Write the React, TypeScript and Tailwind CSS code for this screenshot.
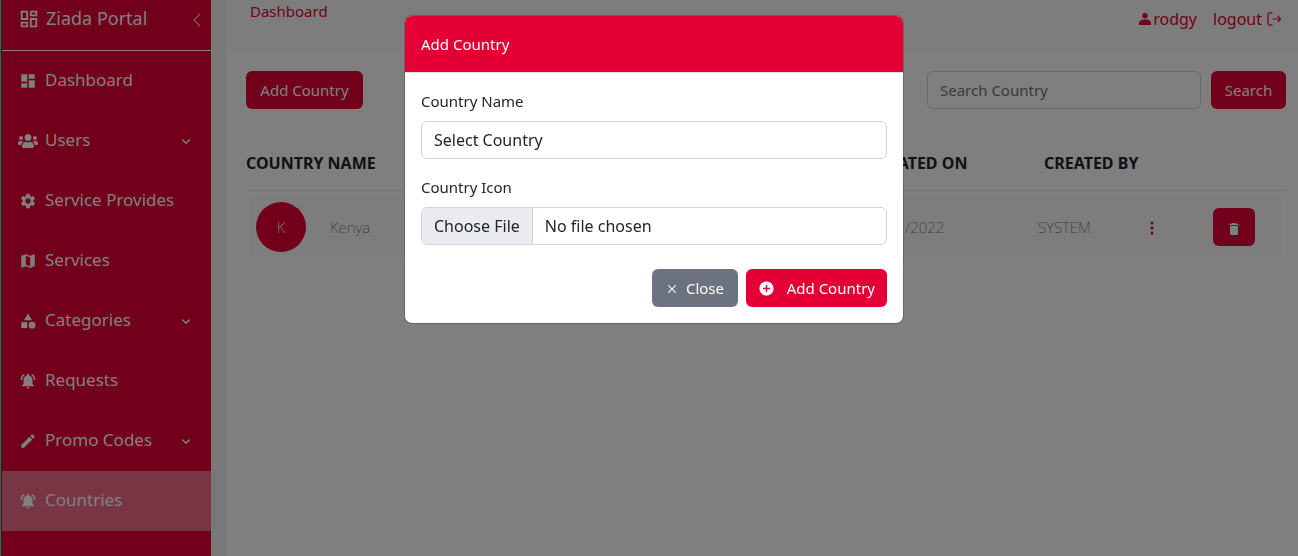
import React from "react";
import type { IconType } from "react-icons";
import { BsChevronLeft, BsThreeDotsVertical } from "react-icons/bs";
import { FaUsers } from "react-icons/fa";
import { BiChevronDown } from "react-icons/bi";
import { AiOutlineClose } from "react-icons/ai";
import {
  MdAddCircle,
  MdCategory,
  MdDashboard,
  MdDelete,
  MdEdit,
  MdMap,
  MdNotificationsActive,
  MdOutlineDashboard,
  MdSettings,
} from "react-icons/md";

type NavItem = { label: string; icon: IconType; expandable?: boolean; active?: boolean };

const navItems: NavItem[] = [
  { label: "Dashboard", icon: MdDashboard },
  { label: "Users", icon: FaUsers, expandable: true },
  { label: "Service Provides", icon: MdSettings },
  { label: "Services", icon: MdMap },
  { label: "Categories", icon: MdCategory, expandable: true },
  { label: "Requests", icon: MdNotificationsActive },
  { label: "Promo Codes", icon: MdEdit, expandable: true },
  { label: "Countries", icon: MdNotificationsActive, active: true },
];

function LogoutIcon() {
  return (
    <svg className="size-4" viewBox="0 0 16 16" fill="none" stroke="currentColor" strokeWidth="1.2" aria-hidden="true">
      <path d="M6.5 1.8H3.6Q2 1.8 2 3.4v9.2q0 1.6 1.6 1.6h2.9M6.5 8h8M11.6 5l3 3-3 3" />
    </svg>
  );
}

function PersonIcon() {
  return (
    <svg className="size-3" viewBox="0 0 12 12" fill="currentColor" aria-hidden="true">
      <circle cx="6" cy="2.7" r="2.7" />
      <path d="M0 12v-1.6C0 7.8 2.2 6.4 6 6.4s6 1.4 6 4V12z" />
    </svg>
  );
}

function Sidebar() {
  return (
    <aside className="w-[210px] shrink-0 border-l border-[#444] bg-[#e40034] text-white">
      <div className="flex h-[51px] items-start border-b border-white pt-2 pr-1.5 pl-4">
        <MdOutlineDashboard className="size-[22px]" />
        <span className="ml-1.5 flex-1 text-lg leading-5">Ziada Portal</span>
        <button type="button" aria-label="Collapse menu" className="mt-1">
          <BsChevronLeft className="size-4" />
        </button>
      </div>
      <nav>
        {navItems.map(({ label, icon: Icon, expandable, active }) => (
          <a
            key={label}
            href="#"
            className={`flex h-[60px] items-center px-4 ${active ? "bg-[#f06d8a]" : ""}`}
          >
            <span className="flex w-5 justify-center">
              <Icon className={Icon === FaUsers ? "size-5" : "size-[18px]"} />
            </span>
            <span className="ml-[7px] flex-1 pb-0.5 text-[17px] leading-6">{label}</span>
            {expandable && <BiChevronDown className="size-[18px]" />}
          </a>
        ))}
      </nav>
    </aside>
  );
}

function CountriesPage() {
  return (
    <div className="min-w-0 flex-1">
      <header className="flex h-[51px] items-start justify-between bg-[#fbfbfb] pr-4 pl-6 text-[#e40034]">
        <a href="#" className="leading-[22px]">Dashboard</a>
        <div className="flex gap-4 pt-2">
          <a href="#" className="flex items-center gap-0.5 text-base leading-[22px]">
            <PersonIcon />
            rodgy
          </a>
          <a href="#" className="flex items-center gap-1 text-base leading-[22px]">
            logout
            <LogoutIcon />
          </a>
        </div>
      </header>
      <main className="pt-5 pr-3 pl-5">
        <div className="flex justify-between">
          <button type="button" className="h-[38px] min-w-[117px] rounded-md bg-[#e40034] px-3 text-white">
            Add Country
          </button>
          <form className="flex gap-2.5">
            <input
              type="text"
              aria-label="Search Country"
              placeholder="Search Country"
              className="h-[38px] w-[274px] rounded-md border border-[#ced4da] px-3 placeholder:text-[#6c757d]"
            />
            <button type="button" className="h-[38px] min-w-[75px] rounded-md bg-[#e40034] px-3 text-white">
              Search
            </button>
          </form>
        </div>
        <table className="mt-[34px] w-full table-fixed border-separate border-spacing-0 text-left">
          <colgroup>
            <col className="w-[84px]" />
            <col />
            <col className="w-[172px]" />
            <col className="w-[106px]" />
            <col className="w-[69px]" />
            <col className="w-[73px]" />
          </colgroup>
          <thead>
            <tr className="h-12 align-top text-base text-[#212529]">
              <th colSpan={2} className="border-b border-[#f0f0f0] pt-2 leading-6">COUNTRY NAME</th>
              <th className="border-b border-[#f0f0f0] pt-2 pl-0.5 leading-6">CREATED ON</th>
              <th colSpan={3} className="border-b border-[#f0f0f0] pt-2 pl-1.5 leading-6">CREATED BY</th>
            </tr>
          </thead>
          <tbody>
            <tr><td colSpan={6} className="h-1.5" /></tr>
            <tr className="h-[60px] font-extralight text-[#707070]">
              <td className="border-l-[5px] border-transparent bg-[#fafafa] bg-clip-padding pl-[5px]">
                <span className="flex size-[50px] items-center justify-center rounded-full bg-[#e40034] text-white">K</span>
              </td>
              <td className="bg-[#fafafa]">Kenya</td>
              <td className="bg-[#fafafa]">14/11/2022</td>
              <td className="bg-[#fafafa]">SYSTEM</td>
              <td className="bg-[#fafafa]">
                <button type="button" aria-label="More options" className="mt-0.5 flex text-[#e40034]">
                  <BsThreeDotsVertical className="size-4" />
                </button>
              </td>
              <td className="border-r-[5px] border-transparent bg-[#fafafa] bg-clip-padding">
                <button type="button" aria-label="Delete Kenya" className="flex h-[38px] w-[42px] items-center justify-center rounded-md bg-[#e40034] pt-1 text-white">
                  <MdDelete className="size-4" />
                </button>
              </td>
            </tr>
          </tbody>
        </table>
      </main>
    </div>
  );
}

function AddCountryDialog() {
  return (
    <div className="fixed inset-0 flex items-start justify-center bg-black/50 px-4 pt-[15px]">
      <section
        role="dialog"
        aria-modal="true"
        aria-labelledby="dialog-title"
        className="ml-2.5 w-full max-w-[500px] overflow-hidden rounded-lg border border-black/20 bg-white bg-clip-padding text-[#212529]"
      >
        <h2 id="dialog-title" className="border-b border-[#dee2e6] bg-[#e40034] p-4 leading-6 text-white">
          Add Country
        </h2>
        <form className="p-4">
          <label htmlFor="country" className="block leading-6">Country Name</label>
          <select
            id="country"
            className="mt-2 h-[38px] w-full appearance-none rounded-md border border-[#ced4da] bg-white px-3 text-base"
          >
            <option>Select Country</option>
          </select>
          <label htmlFor="icon" className="mt-4 block leading-6">Country Icon</label>
          <input
            id="icon"
            type="file"
            className="mt-2 block h-[38px] w-full rounded-md border border-[#ced4da] text-base file:mr-3 file:h-9 file:border-0 file:border-r file:border-solid file:border-[#ced4da] file:bg-[#e9ebef] file:px-3"
          />
          <div className="mt-6 flex justify-end gap-2 text-white">
            <button type="button" className="flex h-[38px] min-w-[86px] items-center justify-between rounded-md bg-[#6c737f] px-3.5">
              <AiOutlineClose className="mt-0.5 size-3" />
              Close
            </button>
            <button type="button" className="flex h-[38px] min-w-[141px] items-center justify-between rounded-md bg-[#e40034] px-3">
              <MdAddCircle className="size-[17px]" />
              Add Country
            </button>
          </div>
        </form>
      </section>
    </div>
  );
}

export default function App() {
  return (
    <div className="flex min-h-screen border-l border-[#aaa] bg-white font-['Noto_Sans',sans-serif] text-[15px]">
      <Sidebar />
      <div className="w-[15px] shrink-0 bg-[#f0f0f0]" />
      <CountriesPage />
      <AddCountryDialog />
    </div>
  );
}
